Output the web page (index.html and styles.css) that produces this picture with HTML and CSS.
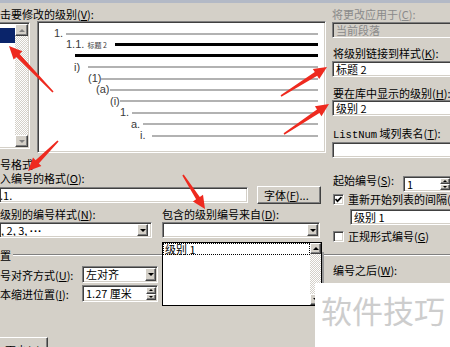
FILE: index.html
```html
<!DOCTYPE html>
<html lang="zh-CN">
<head>
    <meta charset="UTF-8">
    <meta name="viewport" content="width=device-width, initial-scale=1.0">
    <title>定义新多级列表</title>
    <link rel="stylesheet" href="styles.css">
</head>
<body>
    <div class="dialog">
        <div class="cols">
            <!-- 왼쪽: 级别 선택 + 미리보기 + 编号格式 -->
            <div class="left">
                <div class="label first">击要修改的级别(<u>V</u>):</div>
                <div class="level-row">
                    <div class="listbox">
                        <div class="items"><div class="sel"></div></div>
                        <div class="vscroll">
                            <div class="sbtn raised up"></div>
                            <div class="track"></div>
                            <div class="sbtn raised down"></div>
                        </div>
                    </div>
                    <div class="preview sunken">
                        <div class="pv r1"><span class="num">1.</span><span class="bar"></span></div>
                        <div class="pv r2"><span class="num">1.1. <small>标题 2</small></span><span class="bar bold"></span></div>
                        <div class="pv r3"><span class="bar bold"></span></div>
                        <div class="pv r4"><span class="num">i)</span><span class="bar"></span></div>
                        <div class="pv r5"><span class="num">(1)</span><span class="bar"></span></div>
                        <div class="pv r6"><span class="num">(a)</span><span class="bar"></span></div>
                        <div class="pv r7"><span class="num">(i)</span><span class="bar"></span></div>
                        <div class="pv r8"><span class="num">1.</span><span class="bar"></span></div>
                        <div class="pv r9"><span class="num">a.</span><span class="bar"></span></div>
                        <div class="pv r10"><span class="num">i.</span><span class="bar"></span></div>
                    </div>
                </div>

                <div class="label sect">号格式</div>
                <div class="label">入编号的格式(<u>O</u>):</div>
                <div class="fmt-row">
                    <div class="field sunken fmt cut">.1.</div>
                    <button class="btn raised font">字体(<u>F</u>)...</button>
                </div>
                <div class="pair-labels">
                    <div class="label style-label">级别的编号样式(<u>N</u>):</div>
                    <div class="label">包含的级别编号来自(<u>D</u>):</div>
                </div>
                <div class="pair-combos">
                    <div class="combo sunken style cut"><span class="val">, 2, 3, <span class="dots">···</span></span><i class="drop raised"></i></div>
                    <div class="combo sunken from"><span class="val"></span><i class="drop raised"></i></div>
                </div>
            </div>

            <!-- 오른쪽 -->
            <div class="right">
                <div class="label first gray">将更改应用于(<u>C</u>):</div>
                <div class="field sunken disabled">当前段落</div>
                <div class="label r-link">将级别链接到样式(<u>K</u>):</div>
                <div class="field sunken wide">标题 2</div>
                <div class="label r-show">要在库中显示的级别(<u>H</u>):</div>
                <div class="field sunken wide flush">级别 2</div>
                <div class="label r-listnum"><span class="mono">ListNum</span> 域列表名(<u>T</u>):</div>
                <div class="field sunken wide listnum"></div>
                <div class="start-row">
                    <div class="label start-label">起始编号(<u>S</u>):</div>
                    <div class="spin sunken start">
                        <span class="val">1</span>
                        <span class="spin-btns"><i class="raised up"></i><i class="raised down"></i></span>
                    </div>
                </div>
                <div class="chk-row">
                    <span class="check">
                        <svg width="7" height="7" viewBox="0 0 7 7"><polyline points="0.5,3 2.5,5.2 6.5,1" fill="none" stroke="#000" stroke-width="1.7"/></svg>
                    </span>
                    <span>重新开始列表的间隔(<u>R</u>)</span>
                </div>
                <div class="field sunken restart">级别 1</div>
                <div class="chk-row legal">
                    <span class="check"></span>
                    <span>正规形式编号(<u>G</u>)</span>
                </div>
            </div>
        </div>

        <div class="group-head"><span>置</span><div class="groove"></div></div>

        <div class="cols pos">
            <div class="left">
                <div class="pos-row">
                    <div class="label pos-label">号对齐方式(<u>U</u>):</div>
                    <div class="combo sunken align"><span class="val">左对齐</span><i class="drop raised"></i></div>
                </div>
                <div class="pos-row second">
                    <div class="label pos-label">本缩进位置(<u>I</u>):</div>
                    <div class="spin sunken indent">
                        <span class="val">1.27 厘米</span>
                        <span class="spin-btns"><i class="raised up"></i><i class="raised down"></i></span>
                    </div>
                </div>
            </div>
            <div class="right">
                <div class="label after">编号之后(<u>W</u>):</div>
            </div>
        </div>

        <button class="btn raised less">更少(<u>L</u>)</button>

        <!-- 펼쳐진 드롭다운 -->
        <div class="droplist">
            <div class="opts"><div class="opt">级别 1</div></div>
            <div class="vscroll">
                <div class="sbtn raised up"></div>
                <div class="track"></div>
                <div class="sbtn raised down"></div>
            </div>
        </div>

        <div class="watermark">软件技巧</div>

        <!-- 빨간 화살표 -->
        <svg class="arrows" width="450" height="347" viewBox="0 0 450 347">
            <g fill="#ee2a1f">
                <polygon points="53.6,88.5 19.6,50.9 22.3,48.2 9,43 13.6,56.5 16.4,53.9 52.4,89.6"/>
                <polygon points="281.4,93.7 317.2,72.8 319.2,76 327,64 312.8,65.9 314.8,69.1 280.6,92.3"/>
                <polygon points="284.4,131.7 319.4,110 321.5,113.2 329,101 314.9,103.2 317,106.4 283.6,130.3"/>
                <polygon points="57.4,137.4 35.6,157.3 33,154.6 28,168 41.4,163.1 38.8,160.4 58.6,138.6"/>
                <polygon points="182.3,172.4 196.1,196.3 192.9,198.4 205,206 203,191.8 199.8,193.9 183.7,171.6"/>
            </g>
        </svg>
    </div>
</body>
</html>
```

FILE: styles.css
```css
* {
    margin: 0;
    padding: 0;
    box-sizing: border-box;
}

body {
    width: 450px;
    height: 347px;
    overflow: hidden;
    background: #d4d0c8;
    font-family: "Noto Sans CJK SC", "Noto Sans CJK JP", sans-serif;
    font-size: 11px;
    color: #000;
}

.dialog {
    position: relative;
    width: 450px;
    height: 347px;
    overflow: hidden;
    border-top: 3px solid #b3b9c6;
}

/* 3D 테두리 */
.sunken {
    border: 1px solid;
    border-color: #808080 #fff #fff #808080;
    box-shadow: inset 1px 1px #404040, inset -1px -1px #d4d0c8;
    padding: 1px;
}

.raised {
    background: #d4d0c8;
    border: 1px solid;
    border-color: #fff #404040 #404040 #fff;
    box-shadow: inset -1px -1px #808080;
}

.cut {
    border-left: 0;
}

.label {
    height: 14px;
    line-height: 14px;
    white-space: nowrap;
}

.label.gray {
    color: #8a8a8a;
}

.mono {
    font-family: "Liberation Mono", monospace;
    font-size: 10.5px;
}

.dots {
    font-family: "Liberation Sans", Arial, sans-serif;
    font-weight: bold;
    letter-spacing: 0.5px;
}

.cols {
    display: flex;
}

.left {
    width: 326px;
    flex: none;
}

.right {
    width: 140px;
    flex: none;
    margin-left: 6px;
}

.first {
    margin-top: 4px;
}

/* 级别 목록 */
.level-row {
    display: flex;
    align-items: flex-start;
}

.listbox {
    display: flex;
    flex: none;
    width: 30px;
    height: 127px;
    margin-top: 1px;
    border: 1px solid;
    border-color: #808080 #fff #fff #808080;
    border-left: 0;
    box-shadow: inset 0 1px #404040, inset -1px -1px #d4d0c8;
    padding: 1px 1px 1px 0;
}

.items {
    width: 15px;
    background: #fff;
}

.sel {
    margin-top: 4px;
    height: 15px;
    background: #0a246a;
}

.vscroll {
    display: flex;
    flex-direction: column;
    width: 13px;
    flex: none;
    background: repeating-conic-gradient(#fff 0 25%, #d4d0c8 0 50%) 0 0 / 2px 2px;
}

.track {
    flex: 1;
}

.sbtn {
    height: 12px;
    flex: none;
    display: flex;
    align-items: center;
    justify-content: center;
}

.up::after,
.down::after {
    content: "";
    border-left: 3px solid transparent;
    border-right: 3px solid transparent;
}

.up::after {
    border-bottom: 3px solid #000;
}

.down::after {
    border-top: 3px solid #000;
}

.listbox .up::after {
    border-bottom-color: #808080;
}

.listbox .down::after {
    border-top-color: #808080;
}

/* 미리보기 */
.preview {
    flex: none;
    width: 289px;
    height: 132px;
    margin-left: 7px;
    background: #fff;
    padding: 6px 7px 0 1px;
}

.pv {
    display: flex;
    align-items: center;
    height: 11px;
}

.pv.r4,
.pv.r7,
.pv.r9 {
    height: 12px;
}

.num {
    flex: none;
    font-family: "Liberation Sans", Arial, sans-serif;
    font-size: 11px;
    line-height: 11px;
    color: #3a3a3a;
    white-space: nowrap;
}

.num small {
    font-family: "Noto Sans CJK SC", sans-serif;
    font-size: 7px;
}

.bar {
    flex: 1;
    height: 2px;
    background: #b2b2b2;
}

.bar.bold {
    height: 3px;
    background: #000;
}

.r1 { padding-left: 15px; }
.r1 .num { width: 12px; }
.r2 { padding-left: 27px; }
.r2 .num { width: 49px; }
.r3 { padding-left: 36px; }
.r4 { padding-left: 35px; }
.r4 .num { width: 14px; }
.r5 { padding-left: 49px; }
.r5 .num { width: 13px; }
.r6 { padding-left: 57px; }
.r6 .num { width: 14px; }
.r7 { padding-left: 71px; }
.r7 .num { width: 10px; }
.r8 { padding-left: 81px; }
.r8 .num { width: 12px; }
.r9 { padding-left: 92px; }
.r9 .num { width: 12px; }
.r10 { padding-left: 101px; }
.r10 .num { width: 12px; }

/* 编号格式 */
.sect {
    margin-top: 4px;
}

.field {
    height: 16px;
    line-height: 12px;
    background: #fff;
    padding: 1px 3px;
    white-space: nowrap;
    overflow: hidden;
}

.fmt-row {
    display: flex;
    align-items: flex-start;
    height: 18px;
    margin-top: 1px;
}

.field.fmt {
    width: 248px;
    margin-top: 1px;
    padding-left: 0;
}

.btn {
    font: inherit;
    color: #000;
    text-align: left;
    white-space: nowrap;
}

.btn.font {
    width: 64px;
    height: 18px;
    margin-left: 9px;
    padding-left: 6px;
    line-height: 14px;
}

.pair-labels {
    display: flex;
    margin-top: 3px;
}

.style-label {
    width: 162px;
}

.pair-combos {
    display: flex;
    margin-top: 1px;
}

.combo {
    display: flex;
    height: 16px;
    background: #fff;
    line-height: 12px;
}

.combo .val {
    flex: 1;
    padding-left: 2px;
    white-space: nowrap;
    overflow: hidden;
}

.drop {
    flex: none;
    width: 11px;
    display: flex;
    align-items: center;
    justify-content: center;
}

.drop::after {
    content: "";
    border-left: 3px solid transparent;
    border-right: 3px solid transparent;
    border-top: 3px solid #000;
}

.combo.style {
    width: 152px;
    padding-right: 3px;
}

.combo.style .val {
    padding-left: 0;
}

.combo.from {
    width: 158px;
    margin-left: 10px;
}

/* 오른쪽 컬럼 */
.field.disabled {
    width: 130px;
    margin-top: 1px;
    background: #d4d0c8;
    color: #8a8a8a;
}

.r-link {
    margin-top: 8px;
    padding-left: 1px;
}

.r-show {
    margin-top: 9px;
    padding-left: 1px;
}

.r-listnum {
    margin-top: 10px;
    padding-left: 1px;
}

.field.wide {
    width: 130px;
    margin-top: 1px;
}

.field.wide.flush {
    margin-top: 0;
}

.field.wide.listnum {
    margin-top: 2px;
}

.start-row {
    display: flex;
    align-items: flex-start;
    height: 19px;
    margin-top: 15px;
    padding-left: 1px;
}

.start-label {
    width: 70px;
}

.spin {
    display: flex;
    background: #fff;
    line-height: 12px;
}

.spin .val {
    flex: 1;
    padding-left: 2px;
    white-space: nowrap;
}

.spin-btns {
    display: flex;
    flex-direction: column;
    width: 10px;
    flex: none;
}

.spin-btns i {
    flex: 1;
    display: flex;
    align-items: center;
    justify-content: center;
}

.spin-btns .up::after {
    border-left-width: 2px;
    border-right-width: 2px;
    border-bottom-width: 2px;
}

.spin-btns .down::after {
    border-left-width: 2px;
    border-right-width: 2px;
    border-top-width: 2px;
}

.spin.start {
    width: 49px;
    height: 16px;
    margin-top: 3px;
}

.chk-row {
    display: flex;
    align-items: center;
    gap: 4px;
    height: 14px;
    margin-left: 1px;
    white-space: nowrap;
}

.check {
    flex: none;
    width: 11px;
    height: 11px;
    background: #fff;
    border: 1px solid;
    border-color: #808080 #fff #fff #808080;
    box-shadow: inset 1px 1px #404040, inset -1px -1px #d4d0c8;
    display: flex;
    align-items: center;
    justify-content: center;
}

.check svg {
    display: block;
}

.field.restart {
    width: 112px;
    margin-top: 3px;
    margin-left: 18px;
}

.chk-row.legal {
    margin-top: 4px;
}

/* 位置 */
.group-head {
    display: flex;
    align-items: center;
    height: 14px;
    line-height: 14px;
    margin-top: 5px;
}

.groove {
    flex: 1;
    height: 2px;
    margin-left: 2px;
    border-top: 1px solid #808080;
    border-bottom: 1px solid #fff;
}

.pos-row {
    display: flex;
    align-items: center;
    height: 17px;
    margin-top: 4px;
}

.pos-row.second {
    margin-top: 2px;
}

.pos-label {
    width: 82px;
}

.combo.align,
.spin.indent {
    width: 76px;
    height: 17px;
}

.after {
    margin-top: 1px;
    padding-left: 1px;
}

.btn.less {
    display: block;
    width: 50px;
    height: 22px;
    margin-top: 35px;
    margin-left: -2px;
    padding: 4px 0 0 6px;
    line-height: 14px;
}

/* 드롭다운 목록 */
.droplist {
    position: absolute;
    left: 162px;
    top: 239px;
    width: 160px;
    height: 64px;
    display: flex;
    background: #fff;
    border: 1px solid #000;
    box-shadow: 10px 2px 0 -8px #9a9a9a;
}

.opts {
    flex: 1;
}

.opt {
    height: 12px;
    line-height: 10px;
    border: 1px dotted #000;
    padding-left: 1px;
    white-space: nowrap;
}

.droplist .vscroll {
    width: 11px;
}

.droplist .sbtn {
    height: 11px;
}

/* 워터마크 */
.watermark {
    position: absolute;
    left: 315px;
    top: 280px;
    width: 135px;
    height: 67px;
    background: #fff;
    color: #cdcdcd;
    font-size: 31px;
    line-height: 32px;
    padding: 11px 0 0 6px;
    white-space: nowrap;
}

.arrows {
    position: absolute;
    left: 0;
    top: 0;
    pointer-events: none;
}
```
